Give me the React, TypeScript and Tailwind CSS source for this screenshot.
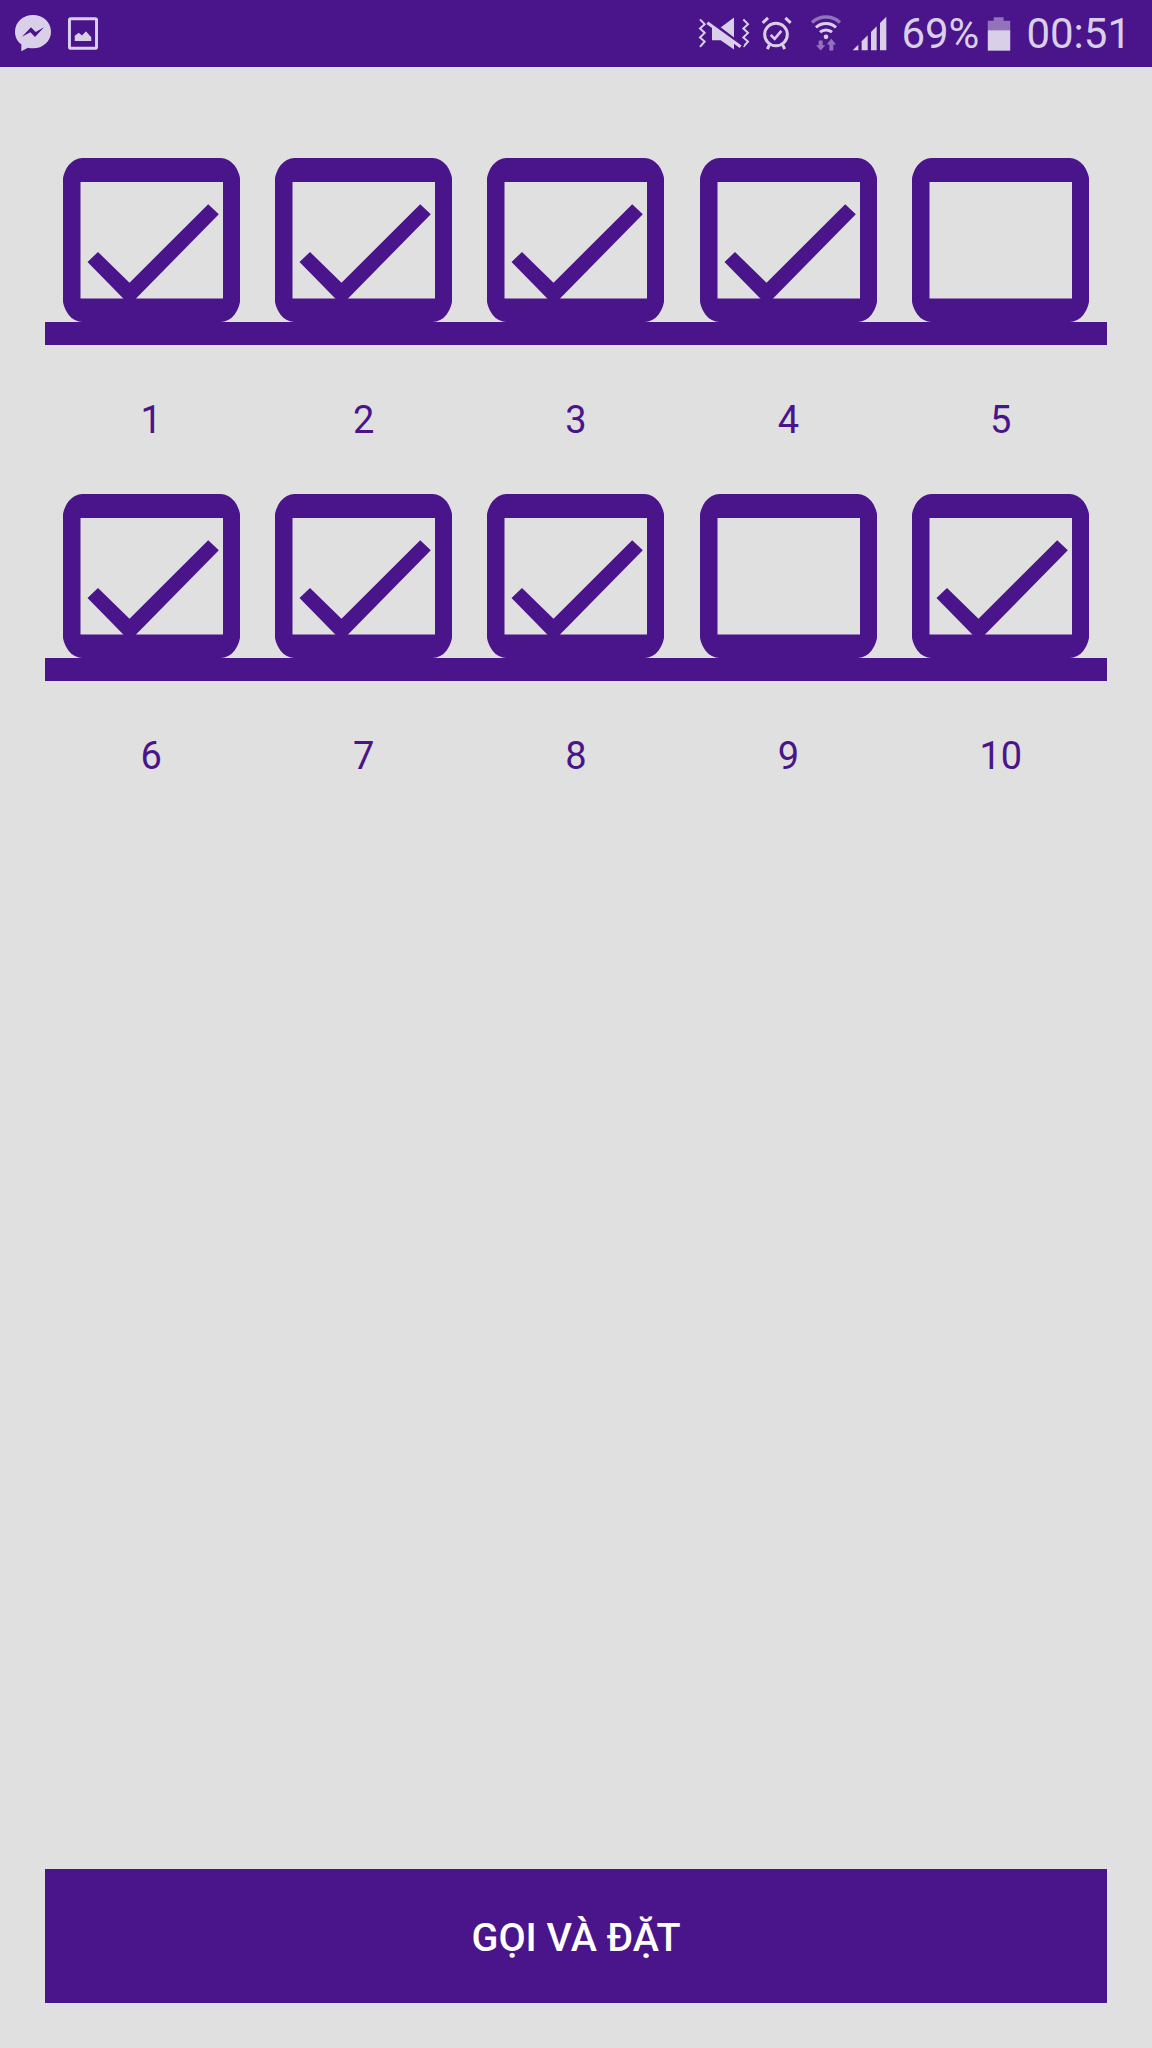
const rows = [
  [{ n: 1, on: true }, { n: 2, on: true }, { n: 3, on: true }, { n: 4, on: true }, { n: 5, on: false }],
  [{ n: 6, on: true }, { n: 7, on: true }, { n: 8, on: true }, { n: 9, on: false }, { n: 10, on: true }],
]

function SeatBox({ on }: { on: boolean }) {
  return (
    <svg width="177" height="164" viewBox="0.5 0 177 164" className="block fill-[#4a148a]">
      <path fillRule="evenodd" d="M20 0H158A20 26 0 0 1 178 26V138A20 26 0 0 1 158 164H20A20 26 0 0 1 0 138V26A20 26 0 0 1 20 0ZM18 24V140.5H160.5V24Z" />
      {on && <polygon points="25,104 35.5,94 67,124.7 145.7,46.3 156.3,56.3 73,141 61.3,141" />}
    </svg>
  )
}

function StatusLeft() {
  return (
    <div className="flex items-center gap-[16px] pl-[15px]">
      <svg width="36" height="37" viewBox="45 47 108 111">
        <path fill="#dacfe9" d="M99 47C69 47 45 69 45 97C45 113 52 126 64 135V156L84 145C89 146 94 147 99 147C129 147 153 125 153 97C153 69 129 47 99 47Z" />
        <path fill="#4a148a" d="M66 112L93 84L107 98L132 84L105 113L91 99Z" />
      </svg>
      <svg width="32" height="33" viewBox="205 49 92 100">
        <rect x="210" y="54" width="82" height="90" rx="4" fill="none" stroke="#dacfe9" strokeWidth="9" />
        <path fill="#dacfe9" d="M226 122V106L238 97L248 105L260 92L276 110V122Z" />
      </svg>
    </div>
  )
}

function StatusRight() {
  return (
    <div className="flex items-center pr-[21px] font-['Roboto',sans-serif] font-normal text-[#dacfe9] text-[42px] leading-none">
      <svg width="52" height="37" viewBox="60 45 156 110" className="mr-[11px]">
        <polyline points="66,58 80,72 66,85 80,98 66,112 80,124 66,140" fill="none" stroke="#dacfe9" strokeWidth="6" />
        <polyline points="196,58 210,72 196,85 210,98 196,112 210,124 196,140" fill="none" stroke="#dacfe9" strokeWidth="6" />
        <polygon points="168,52 168,148 128,120 102,120 102,82 128,82" fill="#dacfe9" />
        <line x1="88" y1="58" x2="195" y2="140" stroke="#4a148a" strokeWidth="12" />
        <line x1="88" y1="68" x2="188" y2="140" stroke="#dacfe9" strokeWidth="9" />
      </svg>
      <svg width="32" height="37" viewBox="245 45 96 110" className="mr-[17px]">
        <circle cx="290" cy="103" r="34" fill="none" stroke="#dacfe9" strokeWidth="9" />
        <polyline points="274,104 286,116 306,92" fill="none" stroke="#dacfe9" strokeWidth="8" />
        <line x1="250" y1="68" x2="266" y2="53" stroke="#dacfe9" strokeWidth="9" />
        <line x1="334" y1="68" x2="318" y2="53" stroke="#dacfe9" strokeWidth="9" />
        <line x1="264" y1="147" x2="270" y2="134" stroke="#dacfe9" strokeWidth="9" />
        <line x1="316" y1="147" x2="310" y2="134" stroke="#dacfe9" strokeWidth="9" />
      </svg>
      <svg width="32" height="37" viewBox="392 42 96 110" className="mr-[10px]">
        <path d="M398 64C422 42 458 42 482 64" fill="none" stroke="#dacfe9" strokeOpacity="0.5" strokeWidth="10" />
        <path d="M410 79C426 63 454 63 470 79" fill="none" stroke="#dacfe9" strokeWidth="9" />
        <path d="M422 93C432 84 448 84 458 93" fill="none" stroke="#dacfe9" strokeWidth="9" />
        <circle cx="440" cy="107" r="7" fill="#dacfe9" />
        <path fill="#dacfe9" fillOpacity="0.5" d="M418 118H430V132H438L424 148L410 132H418ZM450 148H462V130H470L456 112L442 130H450Z" />
      </svg>
      <svg width="35" height="35" viewBox="518 45 105 105" className="mr-[14px]">
        <g fill="#dacfe9">
          <polygon points="520,148 537,131 537,148" />
          <polygon points="547,148 547,121 565,103 565,148" />
          <polygon points="575,148 575,93 592,76 592,148" />
          <polygon points="602,148 602,66 621,47 621,148" />
        </g>
      </svg>
      <span className="w-[78px]">69%</span>
      <svg width="24" height="34" viewBox="926 46 72 103" className="ml-[8px] mr-[15px]">
        <path fill="#dacfe9" fillOpacity="0.5" d="M946 47H976V57H996V86H928V57H946Z" />
        <rect x="928" y="86" width="68" height="62" fill="#dacfe9" />
      </svg>
      <span>00:51</span>
    </div>
  )
}

export default function App() {
  return (
    <div className="h-[2048px] flex flex-col bg-[#e0e0e0] font-['Roboto',sans-serif]">
      <div className="h-[67px] shrink-0 flex items-center justify-between bg-[#4a148a]">
        <StatusLeft />
        <StatusRight />
      </div>

      <div className="flex-1 flex flex-col px-[45px] pt-[91px]">
        {rows.map((row, i) => (
          <div key={i}>
            <div className="grid grid-cols-5 justify-items-center">
              {row.map(s => <SeatBox key={s.n} on={s.on} />)}
            </div>
            <div className="h-[23px] bg-[#4a148a]" />
            <div className="grid grid-cols-5 h-[149px] items-center text-center text-[38px] leading-none text-[#4a148a]">
              {row.map(s => <span key={s.n}>{s.n}</span>)}
            </div>
          </div>
        ))}

        <button className="mt-auto mb-[45px] h-[134px] pt-[3px] bg-[#4a148a] text-white text-[39.5px] font-medium">GỌI VÀ ĐẶT</button>
      </div>
    </div>
  )
}
